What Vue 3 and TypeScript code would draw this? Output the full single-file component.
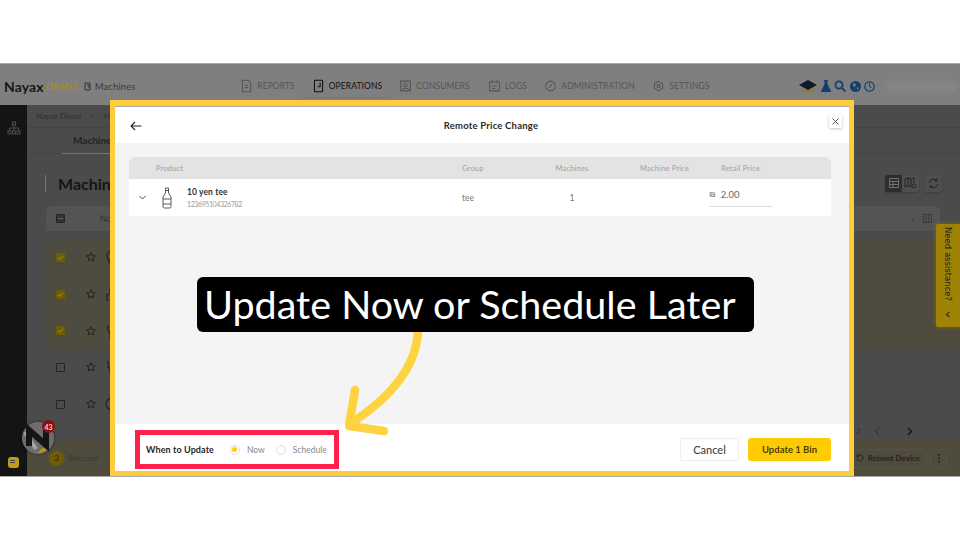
<script setup lang="ts">
interface NavItem { label: string; active?: boolean; icon: string; width: number }
const nav: NavItem[] = [
  { label: 'REPORTS', width: 71, icon: 'M3 1h7l3 3v11H3zM6 7h4M6 10h4' },
  { label: 'OPERATIONS', width: 88, active: true, icon: 'M4 1h8a1 1 0 0 1 1 1v12a1 1 0 0 1-1 1H4a1 1 0 0 1-1-1V2a1 1 0 0 1 1-1zM10 4v5H7' },
  { label: 'CONSUMERS', width: 87, icon: 'M2 2h12v12H2zM8 5a2 2 0 1 1 0 4 2 2 0 0 1 0-4zM4 13c1-3 7-3 8 0' },
  { label: 'LOGS', width: 59, icon: 'M2 3h12v11H2zM5 1v3M11 1v3M5 8h6M5 11h4' },
  { label: 'ADMINISTRATION', width: 105, icon: 'M8 2a6 6 0 1 1 0 12A6 6 0 0 1 8 2zM6 10l4-4' },
  { label: 'SETTINGS', width: 78, icon: 'M8 2l5 3v6l-5 3-5-3V5zM8 6a2 2 0 1 1 0 4 2 2 0 0 1 0-4z' },
]
const rows = [
  { selected: true, icon: 'M7 1a5 5 0 0 1 3 9v3H4v-3a5 5 0 0 1 3-9z' },
  { selected: true, icon: 'M5 1h4v4H5zM2 7h10v7H2z' },
  { selected: true, icon: 'M3 1v5c0 2 2 2 2 2v6M8 1v5c0 2 2 2 2 2v6M12 1v5' },
  { selected: false, icon: 'M3 1v5c0 2 2 2 2 2v6M8 1v5c0 2 2 2 2 2v6M12 1v5' },
  { selected: false, icon: 'M7 1a6 6 0 1 1 0 12A6 6 0 0 1 7 1z' },
]
</script>

<template>
  <div class="stage">
    <div class="app">
      <header class="topbar">
        <div class="brand">
          <span class="logo">Nayax</span><span class="demo">DEMO</span>
          <svg class="mini" width="7" height="9" viewBox="0 0 7 9"><path d="M1 1h5v7H1zM3 3h2v3" fill="none" stroke="#333" stroke-width="1"/></svg>
          <span class="crumb-title">Machines</span>
        </div>
        <nav class="nav">
          <div v-for="n in nav" :key="n.label" class="nav-item" :class="{ active: n.active }" :style="{ width: n.width + 'px' }">
            <svg width="13" height="14" viewBox="0 0 16 16"><path :d="n.icon" fill="none" stroke="currentColor" stroke-width="1.300"/></svg>
            <span>{{ n.label }}</span>
          </div>
        </nav>
        <div class="tools">
          <svg width="18" height="14" viewBox="0 0 18 14"><path d="M9 1l9 5-9 5-9-5z" fill="#0f1a2a"/><path d="M4 9l5 3 5-3v3l-5 2-5-2z" fill="#9a7d14"/></svg>
          <svg width="10" height="12" viewBox="0 0 10 12"><path d="M3 0h4v1H6.500v3L10 11v1H0v-1L3.500 4V1H3z" fill="#143f6e"/></svg>
          <svg width="12" height="12" viewBox="0 0 12 12"><circle cx="5" cy="5" r="3.600" fill="none" stroke="#143f6e" stroke-width="1.700"/><path d="M8 8l3.500 3.500" stroke="#143f6e" stroke-width="1.800"/></svg>
          <svg width="11" height="11" viewBox="0 0 11 11"><circle cx="5.500" cy="5.500" r="5.500" fill="#143f6e"/><path d="M3 2l3 1-1 3-2-1zM7 6l2 1-2 2z" fill="#7f7f7f"/></svg>
          <svg width="11" height="11" viewBox="0 0 11 11"><circle cx="5.500" cy="5.500" r="4.700" fill="none" stroke="#143f6e" stroke-width="1.200"/><path d="M5.500 2.500v3l2 1" fill="none" stroke="#143f6e"/></svg>
          <div class="blurred"></div>
        </div>
      </header>
      <div class="below">
        <aside class="rail">
          <svg width="14" height="14" viewBox="0 0 14 14" fill="none" stroke="#555" stroke-width="0.900"><rect x="5.500" y="1" width="3" height="3"/><rect x="1" y="10" width="3" height="3"/><rect x="5.500" y="10" width="3" height="3"/><rect x="10" y="10" width="3" height="3"/><path d="M7 4v6M2.500 10V7h9v3"/></svg>
          <div class="chat"><i></i><i></i></div>
        </aside>
        <main class="content">
          <div class="breadcrumbs"><span>Nayax Demo</span><span>&gt;</span><span>H</span></div>
          <div class="tabs"><span class="tab">Machines</span></div>
          <div class="title-row">
            <h1 class="page-title">Machines</h1>
            <div class="view-buttons">
              <span class="vb on"><svg width="10" height="10" viewBox="0 0 10 10" fill="none" stroke="#777" stroke-width="0.900"><path d="M.5.5h9v9h-9zM.5 3.500h9M.5 6.500h9M4 3.500v6"/></svg></span>
              <span class="vb"><svg width="13" height="12" viewBox="0 0 13 12" fill="none" stroke="#222" stroke-width="0.900"><path d="M1 2l3-1 3 1 3-1v5M1 2v8l3-1 3 1M4 1v8M7 2v8"/><circle cx="10" cy="9" r="2"/></svg></span>
              <span class="vb solo"><svg width="11" height="11" viewBox="0 0 11 11" fill="none" stroke="#222" stroke-width="1"><path d="M1 5a4.500 4.500 0 0 1 8-2M10 6a4.500 4.500 0 0 1-8 2M9 .5V3H6.500M2 10.500V8h2.500"/></svg></span>
            </div>
          </div>
          <div class="table-head">
            <span class="box dash"></span><span class="head-label">Node</span>
            <span class="spacer"></span><span class="head-chev">›</span>
            <svg width="9" height="9" viewBox="0 0 9 9" fill="none" stroke="#333" stroke-width="0.800"><path d="M.5.500h8v8h-8zM3.200.500v8M5.800.500v8"/></svg>
          </div>
          <div class="table-body">
            <div v-for="(r, i) in rows" :key="i" class="row" :class="{ sel: r.selected }">
              <span class="box" :class="{ checked: r.selected }"><svg v-if="r.selected" width="8" height="7" viewBox="0 0 8 7"><path d="M1 3.500l2 2 4-4" fill="none" stroke="#a68a10" stroke-width="1.200"/></svg></span>
              <span class="divider"></span>
              <svg class="star" width="10" height="10" viewBox="0 0 14 14"><path d="M7 1l1.800 3.900 4.200.5-3.100 2.900.8 4.200L7 10.400l-3.700 2.100.8-4.200L1 5.400l4.200-.5z" fill="none" stroke="#222" stroke-width="1.400"/></svg>
              <svg class="mach" width="14" height="14" viewBox="0 0 14 14"><path :d="r.icon" fill="none" stroke="#222" stroke-width="1.200"/></svg>
            </div>
          </div>
          <div class="pager">
            <span>of 2</span>
            <svg width="6" height="9" viewBox="0 0 6 9"><path d="M5 1L1.500 4.500 5 8" fill="none" stroke="#383838" stroke-width="1.100"/></svg>
            <svg class="next" width="6" height="9" viewBox="0 0 6 9"><path d="M1 1l3.500 3.500L1 8" fill="none" stroke="#111" stroke-width="1.200"/></svg>
          </div>
          <footer class="actions">
            <span class="count">3</span><span class="selected-label">Selected</span>
            <span class="spacer"></span>
            <span class="reboot"><svg width="8" height="8" viewBox="0 0 8 8" fill="none" stroke="#222"><path d="M1 4a3 3 0 1 0 1-2.200M1 .5V2.500h2"/></svg>Reboot Device</span>
            <span class="more"><svg width="2" height="9" viewBox="0 0 2 9" fill="#222"><circle cx="1" cy="1" r="1"/><circle cx="1" cy="4.500" r="1"/><circle cx="1" cy="8" r="1"/></svg></span>
          </footer>
        </main>
      </div>

      <div class="assist"><span>Need assistance?</span><svg width="6" height="7" viewBox="0 0 6 7"><path d="M4.500 1L1.500 3.500 4.500 6" fill="none" stroke="#333" stroke-width="1.200"/></svg></div>
      <div class="avatar">
        <svg width="32" height="32" viewBox="0 0 32 32">
          <circle cx="16" cy="16" r="16" fill="#6d6d6d"/>
          <path d="M3 10L14 27" stroke="#a5a5a5" stroke-width="4"/>
          <path d="M16 31a15 15 0 0 0 12-7l-9 3z" fill="#b79a1c"/>
          <path d="M7 24V8l17 15V6" fill="none" stroke="#141414" stroke-width="6"/>
        </svg>
        <em>43</em>
      </div>

      <section class="modal">
        <div class="modal-head">
          <svg class="back" width="12" height="10" viewBox="0 0 12 10"><path d="M11.500 5H1M5 1L1 5l4 4" fill="none" stroke="#222" stroke-width="1.100"/></svg>
          <strong class="modal-title">Remote Price Change</strong>
          <span class="close"><svg width="7" height="7" viewBox="0 0 7 7"><path d="M.5.500l6 6M6.500.500l-6 6" stroke="#444" stroke-width="0.900"/></svg></span>
        </div>
        <div class="modal-body">
          <div class="ptable">
            <div class="pgrid phead">
              <span></span><span>Product</span><span>Group</span><span class="mid">Machines</span><span class="mprice">Machine Price</span><span>Retail Price</span>
            </div>
            <div class="pgrid prow">
              <svg class="chev" width="7" height="5" viewBox="0 0 7 5"><path d="M.5 1l3 3 3-3" fill="none" stroke="#333" stroke-width="0.900"/></svg>
              <div class="product">
                <svg width="10" height="22" viewBox="0 0 10 22" fill="none" stroke="#333" stroke-width="0.800"><path d="M3.500 1h3v5l2.500 4v9.500a1.500 1.500 0 0 1-1.500 1.500h-5A1.500 1.500 0 0 1 1 19.500V10l2.500-4zM3.500 3.500h3M1 12h8M1 17h8"/></svg>
                <div class="ptext">
                  <div class="pname">10 yen tee</div>
                  <div class="pcode">123695104326782</div>
                </div>
              </div>
              <span class="cell">tee</span>
              <span class="cell mid">1</span>
              <span></span>
              <div class="price"><span class="sym">₪</span><span>2.00</span></div>
            </div>
          </div>
        </div>
        <div class="modal-foot">
          <div class="when">
            <strong>When to Update</strong>
            <label class="radio"><i class="dot on"></i>Now</label>
            <label class="radio"><i class="dot"></i>Schedule</label>
          </div>
          <div class="foot-btns">
            <button class="btn ghost">Cancel</button>
            <button class="btn primary">Update 1 Bin</button>
          </div>
        </div>
      </section>

      <svg class="arrow" width="100" height="110" viewBox="0 0 100 110" fill="none" stroke="#ffd23f" stroke-width="8.500" stroke-linecap="round" stroke-linejoin="round">
        <path d="M73 0C72 36 45 68 5 94"/>
        <path d="M10 60L4 96l35 5"/>
      </svg>
      <div class="banner">Update Now or Schedule Later</div>
    </div>
  </div>
</template>

<style>
html, body { margin: 0; background: #fff; }
</style>

<style scoped>
.stage { width: 960px; height: 540px; padding-top: 63px; box-sizing: border-box; background: #fff; overflow: hidden; font-family: Lato, "Liberation Sans", sans-serif; }
.app { position: relative; width: 960px; height: 414px; box-sizing: border-box; border-top: 1px solid #aaa; border-bottom: 1px solid #aaa; display: flex; flex-direction: column; overflow: hidden; background: #4b4b4b; }
.topbar { height: 41px; flex: none; display: flex; align-items: center; background: #7f7f7f; color: #4a4a4a; padding-top: 3px; box-sizing: border-box; }
.brand { width: 232px; flex: none; display: flex; align-items: center; padding-left: 4px; box-sizing: border-box; }
.logo { font-size: 14px; font-weight: 700; color: #171717; letter-spacing: .1px; }
.demo { font-size: 10px; font-weight: 700; color: #a88b1b; margin-left: 2px; letter-spacing: .3px; }
.mini { margin: 0 4px 0 6px; }
.crumb-title { font-size: 9.500px; color: #3b3b3b; letter-spacing: .1px; }
.nav { width: 558px; flex: none; display: flex; height: 100%; box-sizing: border-box; }
.nav-item { display: flex; align-items: center; gap: 4px; font-size: 8.500px; letter-spacing: .1px; color: #555; height: 100%; box-sizing: border-box; flex: none; justify-content: center; }
.nav-item.active { color: #111; border-bottom: 1px solid #8f7a1c; height: 34px; margin-top: -3px; padding-top: 10px; align-self: flex-start; }
.tools { flex: 1; display: flex; align-items: center; gap: 3.500px; padding-left: 9px; }
.blurred { width: 70px; height: 9px; margin-left: 8px; background: #868686; border-radius: 2px; filter: blur(2px); }
.below { flex: 1; display: flex; min-height: 0; }
.rail { width: 27px; flex: none; background: #141414; display: flex; flex-direction: column; align-items: center; padding-top: 16px; box-sizing: border-box; }
.chat { margin-top: 322px; width: 11px; height: 11px; border-radius: 3px; background: #c09c12; display: flex; flex-direction: column; gap: 1px; padding: 3px 2px; box-sizing: border-box; }
.chat i { height: 1px; width: 5px; background: #444; }
.content { flex: 1; min-width: 0; display: flex; flex-direction: column; }
.breadcrumbs { height: 23px; flex: none; display: flex; gap: 9px; align-items: center; padding-left: 9px; font-size: 8px; color: #2f2f2f; border-bottom: 1px solid #444; box-sizing: border-box; }
.tabs { height: 26px; flex: none; padding-left: 35px; border-bottom: 1px solid #444; box-sizing: border-box; }
.tab { display: inline-block; height: 26px; line-height: 24px; padding: 0 11px; font-size: 10px; font-weight: 700; color: #222; border-bottom: 1px solid #8f7a1c; box-sizing: border-box; }
.title-row { height: 52px; flex: none; display: flex; align-items: center; justify-content: space-between; padding: 6px 18px 0 18px; box-sizing: border-box; }
.page-title { margin: 0; font-size: 16px; font-weight: 700; color: #151515; border-left: 1px solid #8f7a1c; padding-left: 12px; line-height: 17px; }
.view-buttons { display: flex; align-items: center; }
.vb { width: 17px; height: 17px; background: #4f4f4f; display: flex; align-items: center; justify-content: center; border-radius: 0 3px 3px 0; box-shadow: 0 1px 2px #3c3c3c; }
.vb.on { background: #2d2d2d; border-radius: 3px 0 0 3px; }
.vb.solo { margin-left: 6px; border-radius: 3px; }
.table-head { height: 25px; margin: 0 20px 0 19px; flex: none; background: #545454; border-radius: 6px 6px 0 0; display: flex; align-items: center; padding: 0 8px 0 10px; color: #333; font-size: 9px; gap: 3px; }
.head-label { margin-left: 32px; }
.head-chev { margin-right: 6px; }
.spacer { flex: 1; }
.box { width: 9px; height: 9px; flex: none; box-sizing: border-box; border: 1px solid #242424; border-radius: 1px; display: flex; align-items: center; justify-content: center; }
.box.dash { background: #333; }
.box.dash::after { content: ""; width: 5px; height: 1px; background: #666; }
.box.checked { background: #6e5c06; border-color: #6e5c06; }
.table-body { flex: none; margin: 8px 0 0 19px; }
.row { height: 36.700px; display: flex; align-items: center; padding-left: 10px; box-sizing: border-box; background: #4b4b4b; }
.row.sel { background: #4e4b3f; }
.divider { width: 1px; height: 18px; background: #464646; margin: 0 11px 0 9px; }
.mach { margin-left: 9px; }
.pager { flex: none; height: 18px; display: flex; align-items: center; justify-content: flex-end; padding-right: 47px; font-size: 8px; color: #333; }
.pager svg { margin-left: 13px; }
.pager svg.next { margin-left: 27px; }
.actions { flex: 1; background: #4f4b3d; display: flex; align-items: center; padding: 0 13px 0 22px; font-size: 8px; color: #222; }
.count { width: 15px; height: 15px; border-radius: 50%; background: #6e5c06; color: #222; display: flex; align-items: center; justify-content: center; margin-right: 4px; }
.selected-label { color: #383838; }
.reboot { display: flex; align-items: center; gap: 4px; height: 17px; padding: 0 6px 0 4px; border: 1px solid #58533f; border-radius: 3px; font-weight: 700; }
.more { width: 15px; height: 17px; margin-left: 3px; border: 1px solid #58533f; border-radius: 3px; display: flex; align-items: center; justify-content: center; }
.assist { position: absolute; right: 0; top: 160px; width: 24px; height: 103px; background: #a08304; border-radius: 2px 0 0 2px; box-shadow: 0 0 5px rgba(160,131,4,.55); display: flex; flex-direction: column; align-items: center; color: #222; padding-top: 3px; box-sizing: border-box; }
.assist span { writing-mode: vertical-rl; font-family: "DejaVu Sans", sans-serif; font-size: 8.500px; }
.assist svg { margin-top: 10px; }
.avatar { position: absolute; left: 22px; top: 358px; width: 32px; height: 32px; box-shadow: 0 0 3px rgba(0,0,0,.5); border-radius: 50%; }
.avatar em { position: absolute; right: -1px; top: -2px; width: 13px; height: 13px; border-radius: 50%; background: #8e0d0d; color: #ddd; font-style: normal; font-size: 7px; font-weight: 700; display: flex; align-items: center; justify-content: center; }
.modal { position: absolute; left: 110px; top: 36px; width: 744px; height: 376px; box-sizing: border-box; border: 5px solid #ffcd3c; border-top-width: 6px; display: flex; flex-direction: column; background: #f4f4f4; }
.modal-head { position: relative; height: 37px; flex: none; background: #fff; display: flex; align-items: center; justify-content: center; padding-left: 18px; border-top: 1px solid #aaa; box-sizing: border-box; }
.back { position: absolute; left: 15px; top: 14px; }
.modal-title { font-size: 9.500px; letter-spacing: .2px; color: #2a2a2a; font-weight: 700; }
.close { position: absolute; right: 7px; top: 8px; width: 13px; height: 13px; background: #fff; border-radius: 2px; box-shadow: 0 1px 3px rgba(0,0,0,.25); display: flex; align-items: center; justify-content: center; }
.modal-body { flex: 1; padding: 14px 18px 0 14px; min-height: 0; }
.pgrid { display: grid; grid-template-columns: 27px 306px 80px 60px 119px 1fr; align-items: center; }
.phead { height: 22px; background: #e3e3e3; border-radius: 6px 6px 0 0; font-size: 7.500px; color: #a0a0a0; letter-spacing: .2px; }
.mid { text-align: center; }
.mprice { padding-left: 38px; }
.prow { height: 37px; background: #fff; }
.chev { margin-left: 10px; }
.product { display: flex; align-items: center; gap: 15px; margin-left: 6px; }
.ptext { padding-top: 2px; }
.pname { font-size: 8.500px; font-weight: 700; color: #333; letter-spacing: .1px; line-height: 11px; }
.pcode { font-size: 7px; color: #9c9c9c; letter-spacing: -.4px; line-height: 13px; }
.cell { font-size: 8.500px; color: #777; }
.price { display: flex; gap: 5px; align-items: center; width: 63px; height: 18px; margin-left: -12px; margin-top: 1px; padding-bottom: 7px; box-sizing: border-box; border-bottom: 1px solid #ddd; font-size: 9.500px; color: #666; }
.sym { font-size: 8px; }
.modal-foot { height: 47px; flex: none; background: #fff; display: flex; align-items: flex-start; justify-content: space-between; padding: 6px 18px 0 20px; box-sizing: border-box; }
.when { width: 204px; height: 39px; flex: none; box-sizing: border-box; border: 5px solid #ff1f4b; display: flex; align-items: center; padding-left: 6px; font-size: 8.500px; color: #888; white-space: nowrap; }
.when strong { flex: none; color: #1f1f1f; font-size: 9px; font-weight: 700; margin-right: 16px; letter-spacing: .1px; }
.radio { flex: none; display: flex; align-items: center; gap: 7px; margin-right: 11px; }
.dot { width: 10px; height: 10px; flex: none; border: 1px solid #ddd; border-radius: 50%; box-sizing: border-box; display: flex; align-items: center; justify-content: center; }
.dot.on::after { content: ""; width: 5px; height: 5px; border-radius: 50%; background: #ffcb05; }
.foot-btns { display: flex; gap: 9px; padding-top: 8px; }
.btn { height: 23px; border-radius: 3px; font-family: inherit; cursor: pointer; padding: 0; }
.ghost { width: 59px; background: #fff; border: 1px solid #eee; font-size: 11px; font-weight: 500; color: #444; }
.primary { width: 83px; background: #ffcb05; border: 0; font-size: 9.500px; font-weight: 700; color: #4c3f00; }
.banner { position: absolute; left: 197px; top: 213px; width: 557px; height: 55px; box-sizing: border-box; padding-left: 7px; background: #000; border-radius: 6px; color: #fff; font-family: Lato, sans-serif; font-size: 39.500px; line-height: 54px; white-space: nowrap; }
.arrow { position: absolute; left: 345px; top: 266px; }
</style>
